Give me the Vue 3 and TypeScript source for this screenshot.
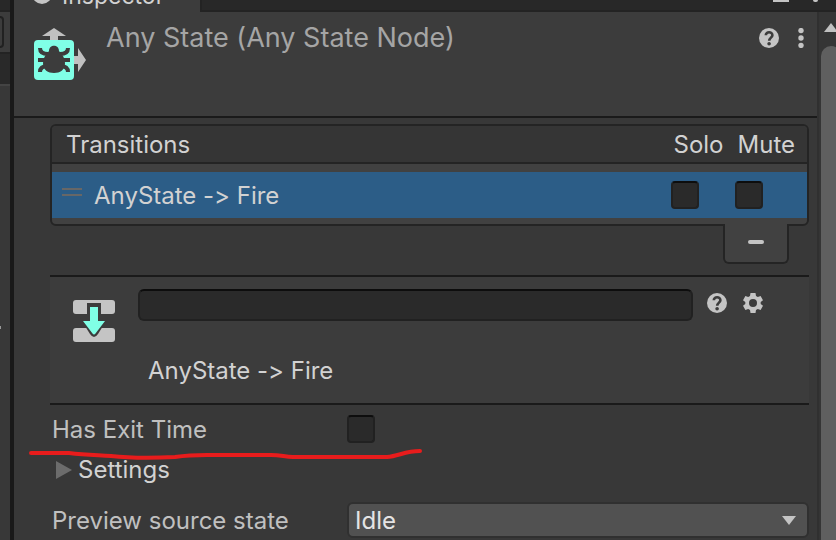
<script setup lang="ts">
import { ref } from 'vue'

interface Transition {
  label: string
  solo: boolean
  mute: boolean
}

const transitions = ref<Transition[]>([{ label: 'AnyState -> Fire', solo: false, mute: false }])
const transitionName = ref('')
const hasExitTime = ref(false)
const previewState = ref('Idle')
</script>

<template>
  <div class="editor">
    <aside class="neighbour" aria-hidden="true">
      <div class="n-tabs"></div>
      <div class="n-tools"><span class="n-search"></span></div>
      <div class="n-strip"></div>
      <div class="n-body"><span class="n-dot"></span></div>
    </aside>

    <section class="inspector">
      <div class="tabbar">
        <div class="tab">
          <span class="info"></span>
          <span>Inspector</span>
        </div>
        <div class="tab-tools">
          <span class="lock"></span>
          <span class="more"></span>
        </div>
      </div>

      <div class="scroller">
        <main class="pane">
          <header class="head">
            <svg class="state-icon" width="54" height="54" viewBox="0 0 54 54">
              <path d="M20 0 32 8H24V13H16V8H8Z" fill="#c0c0c0" />
              <path d="M52 32 44 20V28H39V36H44V44Z" fill="#c0c0c0" />
              <rect x="0" y="12" width="40" height="40" rx="4" fill="#80ffe6" />
              <g fill="none" stroke="#3c3c3c" stroke-width="4">
                <path d="M6 20Q6 26 14 26M34 20Q34 26 26 26M4 32H36M6 44Q6 38 14 38M34 44Q34 38 26 38" />
              </g>
              <path d="M15 23C15 16 25 16 25 23L29 28Q31 31 31 35C31 42 26 45 20 45S9 42 9 35Q9 31 11 28Z" fill="#3c3c3c" />
            </svg>
            <h1>Any State (Any State Node)</h1>
            <div class="head-tools">
              <button type="button" class="icon-btn" aria-label="Help">
                <svg width="20" height="20" viewBox="0 0 20 20">
                  <circle cx="10" cy="10" r="10" fill="#c4c4c4" />
                  <path d="M6.8 7.2C6.8 3.2 13.4 3.2 13.4 7.2C13.4 9.6 10.2 9.7 10.2 12.8" fill="none" stroke="#3c3c3c" stroke-width="2.6" />
                  <circle cx="10.1" cy="15.8" r="1.8" fill="#3c3c3c" />
                </svg>
              </button>
              <button type="button" class="icon-btn" aria-label="More">
                <svg width="6" height="20" viewBox="0 0 6 20" fill="#c4c4c4">
                  <circle cx="3" cy="2.6" r="2.7" /><circle cx="3" cy="10" r="2.7" /><circle cx="3" cy="17.4" r="2.7" />
                </svg>
              </button>
            </div>
          </header>

          <div class="content">
            <div class="list">
              <div class="list-head">
                <span class="grow">Transitions</span>
                <span>Solo</span>
                <span>Mute</span>
              </div>
              <div class="list-body">
                <div v-for="t in transitions" :key="t.label" class="list-row">
                  <span class="grip"></span>
                  <span class="row-label">{{ t.label }}</span>
                  <input v-model="t.solo" type="checkbox" class="check" aria-label="Solo" />
                  <input v-model="t.mute" type="checkbox" class="check" aria-label="Mute" />
                </div>
              </div>
            </div>
            <div class="list-foot">
              <button type="button" class="remove" aria-label="Remove"><span></span></button>
            </div>

            <section class="detail">
              <svg class="trans-icon" width="42" height="42" viewBox="0 0 42 42">
                <rect width="42" height="14" rx="3" fill="#c4c4c4" />
                <rect y="28" width="42" height="14" rx="3" fill="#c4c4c4" />
                <path d="M14 3H28V18H35L25 34Q21 40 17 34L7 18H14Z" fill="#3c3c3c" />
                <path d="M17 7H25V21H32L22.5 33.5Q21 35.5 19.5 33.5L10 21H17Z" fill="#80ffe6" />
              </svg>
              <div class="detail-main">
                <input v-model="transitionName" type="text" class="name" aria-label="Transition name" />
                <span class="detail-label">AnyState -&gt; Fire</span>
              </div>
              <div class="detail-tools">
                <button type="button" class="icon-btn" aria-label="Help">
                  <svg width="20" height="20" viewBox="0 0 20 20">
                    <circle cx="10" cy="10" r="10" fill="#c4c4c4" />
                    <path d="M6.8 7.2C6.8 3.2 13.4 3.2 13.4 7.2C13.4 9.6 10.2 9.7 10.2 12.8" fill="none" stroke="#3c3c3c" stroke-width="2.6" />
                    <circle cx="10.1" cy="15.8" r="1.8" fill="#3c3c3c" />
                  </svg>
                </button>
                <button type="button" class="icon-btn" aria-label="Settings">
                  <svg width="20" height="20" viewBox="0 0 20 20">
                    <path
                      fill="#c4c4c4"
                      fill-rule="evenodd"
                      d="M7.5 0H12.5L13 3L14.8 4L17.6 3L20 7.2L17.7 9V11L20 12.8L17.6 17L14.8 16L13 17L12.5 20H7.5L7 17L5.2 16L2.4 17L0 12.8L2.3 11V9L0 7.2L2.4 3L5.2 4L7 3ZM10 6A4 4 0 1 0 10 14A4 4 0 1 0 10 6Z"
                    />
                  </svg>
                </button>
              </div>
            </section>

            <div class="field exit">
              <label for="exit">Has Exit Time</label>
              <input id="exit" v-model="hasExitTime" type="checkbox" class="check" />
              <svg class="mark" width="394" height="14" viewBox="0 0 394 14">
                <path
                  d="M2 5H40C56 7 66 7 82 8C100 10 126 10 146 9C160 7 166 7 178 7H242C252 7 256 9 264 9H358C370 8 376 3 391 3"
                  fill="none"
                  stroke="#e81c1c"
                  stroke-width="4"
                  stroke-linecap="round"
                />
              </svg>
            </div>

            <button type="button" class="foldout">
              <svg width="16" height="18" viewBox="0 0 16 18"><path d="M0 0 16 9 0 18Z" fill="#6c6c6c" /></svg>
              <span>Settings</span>
            </button>

            <div class="field preview">
              <label for="preview">Preview source state</label>
              <div class="select">
                <select id="preview" v-model="previewState">
                  <option>Idle</option>
                </select>
                <svg class="caret" width="14" height="9" viewBox="0 0 14 9"><path d="M0 0H14L7 9Z" fill="#c4c4c4" /></svg>
              </div>
            </div>
          </div>
        </main>

        <div class="scrollbar" aria-hidden="true">
          <svg width="14" height="9" viewBox="0 0 14 9"><path d="M0 9 7 0 14 9Z" fill="#c0c0c0" /></svg>
          <div class="thumb"></div>
        </div>
      </div>
    </section>
  </div>
</template>

<style>
body {
  overflow: hidden;
  background: #383838;
}
</style>

<style scoped>
* {
  box-sizing: border-box;
}
.editor {
  display: flex;
  height: 100vh;
  overflow: hidden;
  background: #383838;
  color: #d2d2d2;
  font-family: Inter, 'Liberation Sans', sans-serif;
  font-size: 24px;
  font-weight: 400;
  font-variant-ligatures: no-contextual;
  line-height: 30px;
}
button,
input,
select {
  margin: 0;
  padding: 0;
  border: 0;
  background: none;
  color: inherit;
  font: inherit;
}
svg {
  display: block;
  flex: none;
}
.grow {
  flex: 1;
}

/* Edge of the docked window on the left */
.neighbour {
  display: flex;
  flex: none;
  flex-direction: column;
  width: 14px;
  border-right: 4px solid #191919;
}
.n-tabs {
  height: 12px;
  background: #282828;
  border-bottom: 2px solid #232323;
}
.n-tools {
  height: 42px;
  padding: 4px 6px 4px 0;
  background: #3c3c3c;
  border-bottom: 2px solid #232323;
}
.n-search {
  display: block;
  height: 32px;
  border: 2px solid #212121;
  border-left: 0;
  border-radius: 0 6px 6px 0;
}
.n-strip {
  height: 30px;
  background: #292929;
}
.n-body {
  flex: 1;
  padding-top: 240px;
  border-top: 2px solid #444;
}
.n-dot {
  display: block;
  width: 1px;
  height: 3px;
  background: #999;
}

/* Tab strip */
.inspector {
  display: flex;
  flex: 1;
  flex-direction: column;
  min-width: 0;
}
.tabbar {
  display: flex;
  flex: none;
  justify-content: space-between;
  height: 12px;
  overflow: hidden;
  background: #282828;
}
.tab {
  display: flex;
  align-items: flex-end;
  gap: 10px;
  width: 186px;
  padding: 0 0 1px 18px;
  background: #3c3c3c;
  font-size: 23px;
}
.info {
  width: 20px;
  height: 20px;
  margin-bottom: 7px;
  border-radius: 50%;
  background: #c4c4c4;
}
.tab-tools {
  display: flex;
  flex: 1;
  align-items: flex-start;
  justify-content: flex-end;
  gap: 24px;
  padding-right: 18px;
  border-bottom: 2px solid #232323;
  border-left: 2px solid #232323;
}
.lock {
  width: 16px;
  height: 2px;
  background: #c4c4c4;
}
.more {
  width: 5px;
  height: 2px;
  border-radius: 0 0 3px 3px;
  background: #c4c4c4;
}

/* Component header */
.scroller {
  display: flex;
  flex: 1;
  min-height: 0;
}
.pane {
  flex: 1;
  min-width: 0;
}
.head {
  display: flex;
  align-items: flex-start;
  height: 106px;
  padding: 16px 13px 0 20px;
  background: #3c3c3c;
  border-bottom: 2px solid #1a1a1a;
}
h1 {
  flex: 1;
  margin: 0 0 0 18px;
  color: #a5a5a5;
  font-size: 27px;
  font-weight: 400;
  line-height: 20px;
}
.head-tools,
.detail-tools {
  display: flex;
  gap: 16px;
}
.head-tools {
  gap: 19px;
}
.icon-btn {
  display: block;
}

/* Transition list */
.content {
  padding: 6px 8px 0 36px;
}
.list {
  overflow: hidden;
  background: #414141;
  border: 2px solid #242424;
  border-radius: 6px;
}
.list-head {
  display: flex;
  gap: 14px;
  height: 38px;
  padding: 4px 12px 0 14px;
  background: #353535;
  border-bottom: 2px solid #242424;
}
.list-body {
  padding: 8px 0 6px;
}
.list-row {
  display: flex;
  align-items: center;
  gap: 36px;
  height: 46px;
  padding: 0 44px 0 10px;
  background: #2c5d87;
}
.row-label {
  flex: 1;
  padding-top: 2px;
}
.grip {
  width: 20px;
  height: 8px;
  margin: 0 -24px 6px 0;
  border: solid #676767;
  border-width: 2px 0;
}
.check {
  flex: none;
  width: 28px;
  height: 28px;
  appearance: none;
  background: #2a2a2a;
  border: 2px solid #212121;
  border-top-color: #0d0d0d;
  border-radius: 4px;
}
.list-foot {
  display: flex;
  justify-content: flex-end;
  margin-top: -2px;
  padding-right: 20px;
}
.remove {
  display: flex;
  align-items: center;
  justify-content: center;
  width: 66px;
  height: 40px;
  padding-bottom: 2px;
  background: #414141;
  border: 2px solid #242424;
  border-top: 0;
  border-radius: 0 0 6px 6px;
}
.remove span {
  width: 16px;
  height: 4px;
  border-radius: 2px;
  background: #c4c4c4;
}

/* Selected transition */
.detail {
  display: flex;
  align-items: flex-start;
  height: 130px;
  margin-top: 11px;
  padding: 12px 46px 0 23px;
  background: #3c3c3c;
  border: solid #1a1a1a;
  border-width: 2px 0;
}
.trans-icon {
  margin-top: 11px;
}
.detail-main {
  display: flex;
  flex: 1;
  flex-direction: column;
  gap: 35px;
  margin: 0 14px 0 23px;
}
.name {
  width: 100%;
  height: 32px;
  padding: 0 8px;
  background: #2a2a2a;
  border: 2px solid #212121;
  border-top-color: #0d0d0d;
  border-radius: 6px;
}
.detail-label {
  padding-left: 10px;
}
.detail-tools {
  padding-top: 4px;
}

/* Properties */
.field {
  display: flex;
  align-items: center;
  padding-left: 2px;
  color: #c0c0c0;
}
.field label {
  flex: none;
  width: 295px;
  padding-top: 2px;
}
.exit {
  position: relative;
  padding-top: 8px;
}
.mark {
  position: absolute;
  top: 43px;
  left: -21px;
}
.foldout {
  display: flex;
  align-items: center;
  gap: 6px;
  margin-top: 10px;
  padding-left: 6px;
}
.preview {
  margin-top: 17px;
}
.select {
  position: relative;
  flex: 1;
}
select {
  display: block;
  width: 100%;
  height: 36px;
  padding: 1px 6px 0;
  appearance: none;
  color: #e4e4e4;
  background: #515151;
  border: 2px solid #303030;
  border-radius: 6px;
}
.caret {
  position: absolute;
  top: 14px;
  right: 13px;
  pointer-events: none;
}

/* Scrollbar */
.scrollbar {
  display: flex;
  flex: none;
  flex-direction: column;
  gap: 14px;
  width: 19px;
  padding-top: 11px;
  overflow: hidden;
  background: #353535;
  border-left: 2px solid #303030;
}
.scrollbar svg {
  margin-left: 5px;
}
.thumb {
  flex: 1;
  width: 20px;
  margin-left: 2px;
  border-radius: 10px 10px 0 0;
  background: #5f5f5f;
}
</style>
